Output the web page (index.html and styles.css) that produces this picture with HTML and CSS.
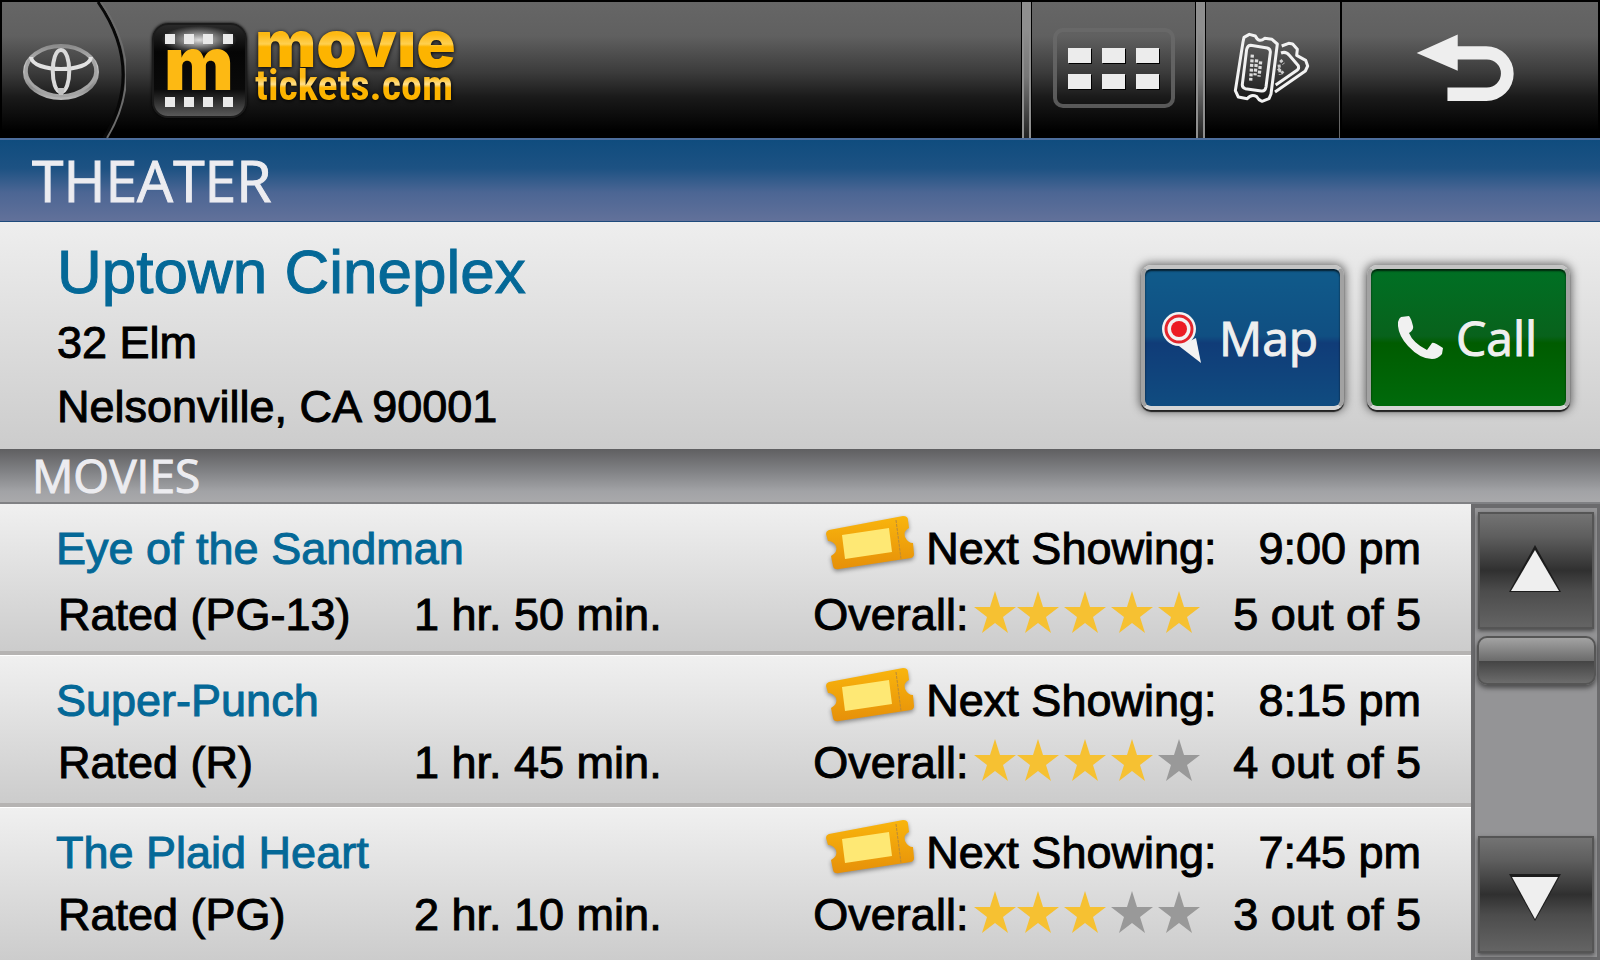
FILE: index.html
```html
<!DOCTYPE html>
<html lang="en">
<head>
<meta charset="utf-8">
<meta name="viewport" content="width=device-width, initial-scale=1">
<title>MovieTickets.com – Uptown Cineplex</title>
<link rel="stylesheet" href="styles.css">
</head>
<body>
<svg class="defs" width="0" height="0" aria-hidden="true">
  <defs>
    <linearGradient id="chrome" x1="0" y1="0" x2="0" y2="1">
      <stop offset="0" stop-color="#8c8c8c"/><stop offset=".4" stop-color="#c6c6c6"/><stop offset=".8" stop-color="#8a8a8a"/><stop offset="1" stop-color="#b5b5b5"/>
    </linearGradient>
    <linearGradient id="gold" x1="0" y1="0" x2="0" y2="1">
      <stop offset="0" stop-color="#f9b50d"/><stop offset="1" stop-color="#e69009"/>
    </linearGradient>
    <linearGradient id="tile" x1="0" y1="0" x2="0" y2="1">
      <stop offset="0" stop-color="#2b2b2b"/><stop offset=".3" stop-color="#050505"/><stop offset=".7" stop-color="#0a0a0a"/><stop offset="1" stop-color="#5c5c5c"/>
    </linearGradient>
    <radialGradient id="glow"><stop offset="0" stop-color="#fff" stop-opacity=".85"/><stop offset="1" stop-color="#fff" stop-opacity="0"/></radialGradient>
    <symbol id="ticket" viewBox="0 0 110 80">
      <path d="M8 25 L82 11 Q87 11 87 15 L88 23 Q82 26 84 32 Q87 38 92 38 L93 49 Q93 52 90 53 L18 64 Q13 65 12 61 L10 51 Q17 47 15 41 Q12 36 7 36 L5 29 Q5 26 8 25Z" fill="url(#gold)"/>
      <path d="M21 30 L68 23 L71 47 L24 54Z" fill="#fee874"/>
      <path d="M75 15 L80 54" stroke="#b98a3a" stroke-width="1" stroke-dasharray="3 1"/>
    </symbol>
    <symbol id="star" viewBox="0 0 42 42">
      <path d="M21 0 L26 16 H42 L29 26 L34 42 L21 32 L8 42 L13 26 L0 16 H16Z"/>
    </symbol>
  </defs>
</svg>

<header class="topbar">
  <button class="home" type="button" aria-label="Toyota home">
    <svg width="126" height="136" viewBox="0 2 126 136" fill="none" aria-hidden="true">
      <path d="M98 2 Q145 70 104 138" stroke="#080808" stroke-width="3"/>
      <path d="M101 2 Q148 70 107 138" stroke="#6c6c6c" stroke-width="2"/>
      <ellipse cx="61" cy="72" rx="36" ry="26" stroke="url(#chrome)" stroke-width="4"/>
      <path d="M31 58 Q20 73 34 86 Q45 95 61 96 Q77 95 88 86 Q102 73 91 58" stroke="#a5a5a5" stroke-width="3"/>
      <path d="M31 57 C32 73 90 73 91 57" stroke="#e2e2e2" stroke-width="4"/>
      <path d="M61 50 C50 50 50 92 61 92 C72 92 72 50 61 50Z" stroke="#dadada" stroke-width="4"/>
      <path d="M57 88 h8 l-2 7 h-4z" fill="#c2c2c2"/>
    </svg>
  </button>
  <div class="brand">
    <svg class="brand-tile" width="95" height="95" viewBox="0 0 95 95" aria-hidden="true">
      <rect x="1" y="1" width="93" height="93" rx="15" fill="url(#tile)" stroke="#1b1b1b" stroke-width="2"/>
      <ellipse cx="47" cy="17" rx="38" ry="14" fill="url(#glow)"/>
      <g fill="#e9e9e9">
        <path d="M13 11h10v10h-10zM32 11h10v10h-10zM51 11h10v10h-10zM71 11h10v10h-10z"/>
        <path d="M13 74h10v10h-10zM32 74h10v10h-10zM51 74h10v10h-10zM71 74h10v10h-10z"/>
      </g>
      <text class="brand-m" x="47" y="67" text-anchor="middle">m</text>
    </svg>
    <div class="brand-name">
      <span class="brand-movie">movıe</span>
      <span class="brand-tickets">tickets.com</span>
    </div>
  </div>
  <span class="divider"></span>
  <button class="tool tool-menu" type="button" aria-label="Menu">
    <svg width="122" height="80" viewBox="0 0 122 80" aria-hidden="true">
      <rect x="2" y="2" width="118" height="76" rx="8" fill="none" stroke="#6a6a6a" stroke-opacity=".8" stroke-width="4"/>
      <path d="M16 21h23v15h-23zM50 21h23v15h-23zM84 21h23v15h-23zM16 47h23v15h-23zM50 47h23v15h-23zM84 47h23v15h-23z"/>
      <path fill="#ececec" d="M15 20h23v15h-23zM49 20h23v15h-23zM83 20h23v15h-23zM15 46h23v15h-23zM49 46h23v15h-23zM83 46h23v15h-23z"/>
    </svg>
  </button>
  <span class="divider"></span>
  <button class="tool tool-tickets" type="button" aria-label="Tickets">
    <svg width="110" height="100" viewBox="0 0 330 300" fill="none" stroke="#f2f2f2" stroke-width="9" stroke-linejoin="round" aria-hidden="true">
      <path d="M78 52 L94 43 L112 48 Q123 70 140 55 L162 58 L178 72 L159 222 L153 236 L132 244 Q121 240 116 230 Q100 221 88 236 L61 231 L52 212 L75 66Z"/>
      <path d="M98 76 L148 84 Q158 87 157 97 L144 201 Q141 215 130 213 L82 206 Q72 203 73 193 L86 88 Q89 76 98 76Z"/>
      <path d="M191 78 L212 70 L224 72 L238 88 L236 106 L263 121 L269 138 L262 153 L171 216"/>
      <path d="M189 99 Q204 93 214 106 L241 137 Q244 146 237 151 L173 195"/>
      <path d="M103 104 l-5 78 M116 118 l-5 48 M128 124 l-5 46" stroke-width="10" stroke-dasharray="9 5" stroke="#dedede"/>
      <path d="M187 120 l10 12 M180 146 l16 14 M183 134 l4 30" stroke-width="9" stroke-dasharray="9 5" stroke="#cfcfcf"/>
    </svg>
  </button>
  <button class="tool tool-back" type="button" aria-label="Back">
    <svg width="98" height="70" viewBox="80 38 296 210" aria-hidden="true">
      <path fill="#eee" d="M82 98 L206 42 V77 H292 A83 83 0 0 1 292 243 H175 V202 H294 A42 42 0 0 0 294 117 H206 V151Z"/>
    </svg>
  </button>
</header>

<h1 class="section-title">THEATER</h1>

<section class="theater">
  <div class="theater-info">
    <h2 class="theater-name">Uptown Cineplex</h2>
    <address class="theater-address">32 Elm<br>Nelsonville, CA 90001</address>
  </div>
  <div class="actions">
    <button class="action action-map" type="button">
      <svg width="40" height="52" viewBox="0 0 40 52" aria-hidden="true">
        <path d="M17 34 L34 26 L39 51Z" fill="#f3f3f3"/>
        <circle cx="17" cy="17" r="17" fill="#f3f3f3"/>
        <circle cx="17" cy="17" r="13" fill="none" stroke="#e3262d" stroke-width="3"/>
        <circle cx="17" cy="17" r="8" fill="#ec1c24"/>
      </svg>
      <span>Map</span>
    </button>
    <button class="action action-call" type="button">
      <svg width="45" height="43" viewBox="0 0 45 43" aria-hidden="true">
        <path fill="#f1f1f1" d="M3 1 L11 0 Q13 2 15 10 Q16 14 11 17 Q15 27 29 34 L34 27 Q36 26 45 32 L44 38 Q40 43 34 43 Q22 43 10 30 Q-1 18 0 6Q1 2 3 1Z"/>
      </svg>
      <span>Call</span>
    </button>
  </div>
</section>

<h2 class="list-title">MOVIES</h2>

<main class="listing">
  <ul class="movies">
    <li class="movie movie-first">
      <div class="facts">
        <a class="title" href="#eye">Eye of the Sandman</a>
        <span class="rated">Rated (PG-13)</span>
        <span>1 hr. 50 min.</span>
      </div>
      <div class="status">
        <svg class="ticket" width="110" height="80" aria-hidden="true"><use href="#ticket"/></svg>
        <span class="showing">Next Showing:</span>
        <span class="value">9:00 pm</span>
        <span class="overall">Overall:</span>
        <svg class="stars" width="226" height="42" role="img" aria-label="5 stars">
          <use href="#star" x="0" width="42" height="42"/><use href="#star" x="43" width="42" height="42"/><use href="#star" x="90" width="42" height="42"/><use href="#star" x="137" width="42" height="42"/><use href="#star" x="184" width="42" height="42"/>
        </svg>
        <span class="value">5 out of 5</span>
      </div>
    </li>
    <li class="movie">
      <div class="facts">
        <a class="title" href="#super-punch">Super-Punch</a>
        <span class="rated">Rated (R)</span>
        <span>1 hr. 45 min.</span>
      </div>
      <div class="status">
        <svg class="ticket" width="110" height="80" aria-hidden="true"><use href="#ticket"/></svg>
        <span class="showing">Next Showing:</span>
        <span class="value">8:15 pm</span>
        <span class="overall">Overall:</span>
        <svg class="stars" width="226" height="42" role="img" aria-label="4 stars">
          <use href="#star" x="0" width="42" height="42"/><use href="#star" x="43" width="42" height="42"/><use href="#star" x="90" width="42" height="42"/><use href="#star" x="137" width="42" height="42"/><use class="off" href="#star" x="184" width="42" height="42"/>
        </svg>
        <span class="value">4 out of 5</span>
      </div>
    </li>
    <li class="movie">
      <div class="facts">
        <a class="title" href="#plaid-heart">The Plaid Heart</a>
        <span class="rated">Rated (PG)</span>
        <span>2 hr. 10 min.</span>
      </div>
      <div class="status">
        <svg class="ticket" width="110" height="80" aria-hidden="true"><use href="#ticket"/></svg>
        <span class="showing">Next Showing:</span>
        <span class="value">7:45 pm</span>
        <span class="overall">Overall:</span>
        <svg class="stars" width="226" height="42" role="img" aria-label="3 stars">
          <use href="#star" x="0" width="42" height="42"/><use href="#star" x="43" width="42" height="42"/><use href="#star" x="90" width="42" height="42"/><use class="off" href="#star" x="137" width="42" height="42"/><use class="off" href="#star" x="184" width="42" height="42"/>
        </svg>
        <span class="value">3 out of 5</span>
      </div>
    </li>
  </ul>
  <div class="scroller">
    <button class="step step-up" type="button" aria-label="Scroll up">
      <svg width="52" height="48" viewBox="0 0 52 48" aria-hidden="true"><path d="M26 0 L52 47 H0Z" fill="#1c1c1c"/><path d="M26 5 L50 46 H2Z" fill="#efefef"/></svg>
    </button>
    <div class="thumb"></div>
    <button class="step step-down" type="button" aria-label="Scroll down">
      <svg width="52" height="48" viewBox="0 0 52 48" aria-hidden="true"><path d="M0 1 H52 L26 48Z" fill="#1c1c1c"/><path d="M3 4 H49 L26 46Z" fill="#efefef"/></svg>
    </button>
  </div>
</main>
</body>
</html>
```
FILE: styles.css
```css
* { box-sizing: border-box; }

body {
  margin: 0;
  min-height: 100vh;
  display: flex;
  flex-direction: column;
  background: #cfcfcf;
  color: #000;
  font-family: "Liberation Sans", Arial, sans-serif;
  font-size: 45px;
}

button {
  margin: 0;
  padding: 0;
  border: 0;
  background: none;
  font: inherit;
  color: inherit;
  cursor: pointer;
}

svg { display: block; flex: none; }
.defs { position: absolute; }

/* Top bar */
.topbar {
  display: flex;
  align-items: stretch;
  border-top: 2px solid #000;
  border-left: 2px solid #000;
  border-right: 2px solid #000;
  background: linear-gradient(#666 0%, #606060 25%, #3b3b3b 52%, #1a1a1a 70%, #000 95%);
}

.home { margin-left: -2px; }

.brand {
  flex: 1;
  display: flex;
  align-items: center;
  gap: 8px;
  padding-left: 26px;
}

.brand-tile { overflow: visible; border-radius: 16px; box-shadow: 0 0 3px #000; }

.brand-m {
  font-family: Inter, "Liberation Sans", sans-serif;
  font-weight: 900;
  font-size: 74px;
  fill: #fdb913;
}

.brand-name {
  display: flex;
  flex-direction: column;
  padding-bottom: 16px;
  font-weight: 700;
  filter: drop-shadow(0 1px 2px #000);
}

.brand-movie,
.brand-tickets {
  color: transparent;
  background-clip: text;
  -webkit-background-clip: text;
}

.brand-movie {
  font-family: Inter, "Liberation Sans", sans-serif;
  font-weight: 900;
  font-size: 65px;
  line-height: 48px;
  background-image: linear-gradient(#fdb913 30%, #ffd050 50%, #fdb400 56%);
}

.brand-tickets {
  font-family: "Roboto Condensed", "Liberation Sans", sans-serif;
  font-size: 42px;
  line-height: 36px;
  background-image: linear-gradient(#fdb913 25%, #ffe08c 45%, #fdb400 55%);
}

.divider {
  width: 11px;
  border: solid #000;
  border-width: 0 1px;
  background: linear-gradient(90deg, #8f8f8f 2px, transparent 2px, transparent 7px, #8f8f8f 7px),
    linear-gradient(#8e8e8e 20%, #777 55%, #222 100%);
}

.tool {
  display: flex;
  align-items: center;
  justify-content: center;
  padding-bottom: 4px;
}

.tool-menu { width: 163px; }
.tool-tickets { width: 136px; padding: 0; border-right: 2px solid #000; box-shadow: inset -1px 0 #666; }
.tool-back { width: 256px; padding-right: 10px; }

/* Headings */
.section-title,
.list-title {
  margin: 0;
  padding-left: 32px;
  font-family: "Open Sans", "Noto Sans", sans-serif;
  font-weight: 400;
  color: #ececf0;
  -webkit-text-stroke: 1px #ececf0;
}

.section-title {
  font-size: 57px;
  line-height: 81px;
  border-top: 2px solid #4c6d9c;
  border-bottom: 1px solid #1e4a7c;
  background: linear-gradient(#0f4c7e 0%, #1d5283 35%, #4c6694 65%, #62719a 100%);
}

.list-title {
  font-size: 46px;
  line-height: 53px;
  border-bottom: 2px solid #808184;
  background: linear-gradient(#5f5f61, #7f8083 40%, #a2a3a6 80%, #a9a9ab);
}

/* Theater details */
.theater {
  display: flex;
  justify-content: space-between;
  align-items: center;
  padding: 14px 30px 10px 57px;
  background: linear-gradient(#eee, #ccc);
}

.theater-name {
  margin: 0 0 3px;
  font-size: 62px;
  line-height: 72px;
  font-weight: 400;
  color: #046897;
  -webkit-text-stroke: 1px #046897;
}

.theater-address {
  font-style: normal;
  line-height: 64px;
  -webkit-text-stroke: 1px #000;
}

.actions { display: flex; gap: 23px; }

.action {
  display: flex;
  align-items: center;
  width: 203px;
  height: 145px;
  border: 4px solid;
  border-color: #c4c4c4 #a2a2a2 #d6d6d6;
  border-radius: 10px;
  box-shadow: 0 2px 1px #222, 0 0 8px 2px rgba(0, 0, 0, .5), inset 0 2px 2px rgba(0, 0, 0, .7);
  font-family: "Open Sans", "Noto Sans", sans-serif;
  font-size: 48px;
  line-height: 72px;
  color: #efefef;
  -webkit-text-stroke: 1px #efefef;
}

.action-map {
  gap: 17px;
  padding-left: 17px;
  background: linear-gradient(#105b8b 0%, #104f82 49%, #103c78 54%, #104c80 100%);
}

.action-call {
  gap: 13px;
  padding-left: 27px;
  background: linear-gradient(#007024 0%, #08621c 49%, #005c00 54%, #006a0b 100%);
}

/* Movie list */
.listing { flex: 1; display: flex; }

.movies {
  flex: 1;
  display: flex;
  flex-direction: column;
  margin: 0;
  padding: 0;
  list-style: none;
  line-height: 60px;
  -webkit-text-stroke: 1px currentColor;
}

.movie {
  display: flex;
  justify-content: space-between;
  padding: 15px 50px 10px 56px;
  border-top: 1px solid #fff;
  border-bottom: 4px solid #b5b3b2;
  background: linear-gradient(#f0f0f0, #ccc);
}

.movie-first { padding-bottom: 6px; border-top: 0; }
.movie:last-child { flex: 1; border-bottom: 0; }

.facts {
  display: grid;
  grid-template-columns: 358px auto;
  align-content: start;
  row-gap: 2px;
}

.title {
  grid-column: 1 / -1;
  color: #046897;
  text-decoration: none;
}

.rated { padding-left: 2px; }

.status {
  display: grid;
  grid-template-columns: 113px 45px 262px auto;
  align-content: start;
  row-gap: 2px;
}

.movie-first .facts,
.movie-first .status { row-gap: 6px; }

.ticket {
  margin: -14px 0 -6px 8px;
  filter: drop-shadow(0 2px 2px rgba(0, 0, 0, .4));
}

.showing { grid-column: 2 / 4; }
.overall { grid-column: 1 / 3; }
.value { text-align: right; }

.stars { margin: 6px 0 0 3px; fill: #f6c132; stroke: none; }
.off { fill: #999; }

/* Scroll bar */
.scroller {
  display: flex;
  flex-direction: column;
  align-items: center;
  width: 129px;
  padding: 4px 0;
  border: solid #6b6b6d;
  border-width: 4px 3px 3px 4px;
  background: #949496;
}

.step {
  display: flex;
  align-items: center;
  justify-content: center;
  width: 116px;
  height: 117px;
  border: 2px solid #555;
  background: linear-gradient(#737373, #5e5e5e 20%, #303030 50%, #4c4c4c 68%, #646464);
  box-shadow: 0 2px 4px rgba(0, 0, 0, .5);
}

.step-up { padding: 0 2px 4px 0; }
.step-down { margin-top: auto; padding: 4px 2px 0 0; }

.thumb {
  width: 119px;
  height: 49px;
  margin-top: 7px;
  border: 2px solid #555;
  border-radius: 10px;
  background: linear-gradient(#a3a3a3, #6c6c6c 50%, #444 51%, #6c6c6c);
  box-shadow: 0 3px 5px rgba(0, 0, 0, .5);
}
```
